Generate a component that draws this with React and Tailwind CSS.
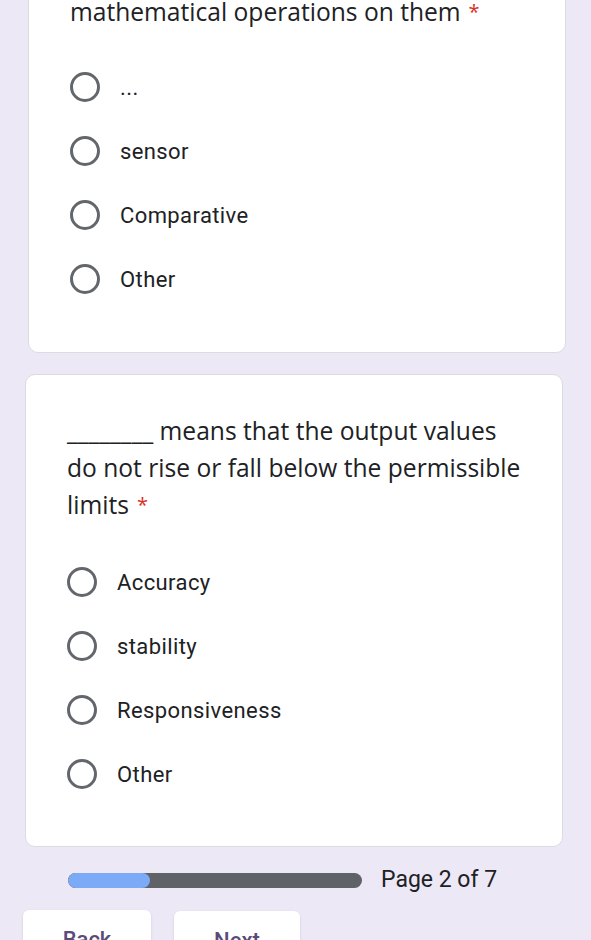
const first = ["...", "sensor", "Comparative", "Other"];
const second = ["Accuracy", "stability", "Responsiveness", "Other"];

function Option({ label }) {
  return (
    <div className="h-[64px] flex items-center">
      <div className="w-[30px] h-[30px] rounded-full border-[3px] border-[#63666b] shrink-0" />
      <span className="ml-[20px] text-[22px] tracking-[0.4px] text-[#202124]">{label}</span>
    </div>
  );
}

function Asterisk() {
  return <span className="ml-[8px] text-[#d93025] text-[20px] align-top">*</span>;
}

export default function App() {
  const qFont = { fontFamily: '"Open Sans", sans-serif' };
  return (
    <div className="w-[591px] h-[940px] overflow-hidden bg-[#ece8f6]" style={{ fontFamily: "Roboto, sans-serif" }}>
      <div className="ml-[28px] w-[538px] -mt-[27px] pt-[20px] pb-[41px] pl-[41px] pr-[30px] bg-white rounded-[10px] border border-[#dadce0]">
        <div className="text-[24.6px] leading-[36px] text-[#202124] whitespace-nowrap" style={qFont}>
          mathematical operations on them<Asterisk />
        </div>
        <div className="mt-[25px]">
          {first.map((o) => <Option key={o} label={o} />)}
        </div>
      </div>

      <div className="ml-[25px] mt-[21px] w-[538px] pt-[37px] pb-[40px] pl-[41px] pr-[10px] bg-white rounded-[10px] border border-[#dadce0]">
        <div className="text-[24.6px] leading-[37px] text-[#202124] whitespace-nowrap" style={qFont}>
          ________ means that the output values<br />
          do not rise or fall below the permissible<br />
          limits<Asterisk />
        </div>
        <div className="mt-[27px]">
          {second.map((o) => <Option key={o} label={o} />)}
        </div>
      </div>

      <div className="mt-[18px] h-[30px] flex items-center pl-[68px]">
        <div className="w-[294px] h-[15px] rounded-full bg-[#5f6368] overflow-hidden">
          <div className="w-[82px] h-full rounded-full bg-[#7baaf7]" />
        </div>
        <span className="ml-[19px] text-[23px] text-[#202124]">Page 2 of 7</span>
      </div>

      <div className="mt-[15px] flex gap-[23px] pl-[23px]">
        <button className="w-[128px] h-[58px] bg-white rounded-[6px] shadow-sm text-[22px] font-medium text-[#5a4b7a]">Back</button>
        <button className="w-[126px] h-[58px] mt-[1px] bg-white rounded-[6px] shadow-sm text-[22px] font-medium text-[#5a4b7a]">Next</button>
      </div>
    </div>
  );
}
